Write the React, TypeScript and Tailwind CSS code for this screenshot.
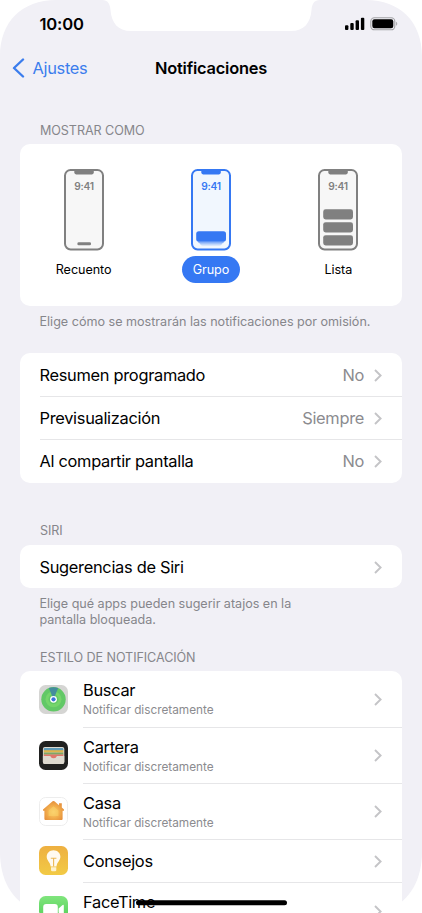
import type { ReactNode } from "react"

function Chevron() {
  return (
    <svg width="8" height="13" viewBox="0 0 8 13" fill="none" className="shrink-0">
      <path d="M1 1L6.6 6.5L1 12" stroke="#c4c4c7" strokeWidth="1.9" />
    </svg>
  )
}

function StatusIcons() {
  return (
    <svg width="54" height="14" viewBox="0 0 54 14">
      <rect x="0" y="8.3" width="3.4" height="4.7" rx="1" />
      <rect x="5.3" y="6" width="3.4" height="7" rx="1" />
      <rect x="10.6" y="3.3" width="3.4" height="9.7" rx="1" />
      <rect x="15.9" y="0.8" width="3.4" height="12.2" rx="1" />
      <rect x="25.8" y="0.8" width="24" height="12" rx="3.6" fill="none" stroke="#a3a3a6" strokeWidth="1.1" />
      <rect x="27.3" y="2.3" width="21" height="9" rx="2.2" />
      <path d="M51.2 4.8C52.6 5.3 52.6 8.3 51.2 8.8Z" fill="#a3a3a6" />
    </svg>
  )
}

type Mode = "count" | "stack" | "list"

function PhonePreview({ mode }: { mode: Mode }) {
  const active = mode === "stack"
  const color = active ? "#3578f3" : "#808080"
  return (
    <svg width="40" height="82" viewBox="0 0 40 82">
      <rect x="1" y="1" width="38" height="79.4" rx="5.6" fill={active ? "#f1f7fe" : "#f7f7f7"} stroke={color} strokeWidth="2" />
      <path d="M10.3 1H29.8V3.6Q29.8 5.4 28 5.4H12.1Q10.3 5.4 10.3 3.6Z" fill={color} />
      <text x="20" y="21.300" textAnchor="middle" fontSize="10.2" fontWeight="600" letterSpacing="-0.25" fill={color}>
        9:41
      </text>
      {mode === "count" && <rect x="13.4" y="73.3" width="13.6" height="3" rx="1.3" fill={color} />}
      {mode === "stack" && (
        <>
          <rect x="9" y="68" width="22" height="8.6" rx="2.5" fill="#c0d7fb" />
          <rect x="7" y="66" width="26" height="8.6" rx="2.5" fill="#85aff8" />
          <rect x="5.2" y="62.3" width="29.8" height="10.2" rx="2.6" fill={color} />
        </>
      )}
      {mode === "list" && (
        <>
          <rect x="5.2" y="40.3" width="29.8" height="10.2" rx="2.4" fill={color} />
          <rect x="5.2" y="53.2" width="29.8" height="10.2" rx="2.4" fill={color} />
          <rect x="5.2" y="66.2" width="29.8" height="10.2" rx="2.4" fill={color} />
        </>
      )}
    </svg>
  )
}

function BuscarIcon() {
  return (
    <svg width="29" height="29" viewBox="0 0 29 29">
      <rect width="29" height="29" rx="6.5" fill="#d5d5d3" />
      <circle cx="14.5" cy="14.3" r="12.2" fill="#62c866" />
      <circle cx="14.5" cy="14.3" r="8" fill="#75d56b" />
      <circle cx="14.5" cy="14.3" r="5" fill="#62c866" />
      <path d="M14.5 14.3L9.8 3.1Q14.5 1.2 19.2 3.1Z" fill="#448d9d" />
      <circle cx="14.5" cy="14.3" r="3.4" fill="#fff" />
      <circle cx="14.5" cy="14.3" r="2.1" fill="#3973dc" />
    </svg>
  )
}

function CarteraIcon() {
  return (
    <svg width="29" height="29" viewBox="0 0 29 29">
      <rect width="29" height="29" rx="6.5" fill="#202120" />
      <rect x="3.9" y="6" width="21.4" height="17" rx="2" fill="#dedad0" />
      <rect x="4.8" y="7" width="19.6" height="3" rx="1" fill="#5f9bb8" />
      <rect x="4.8" y="9.2" width="19.6" height="2.3" fill="#dfb54b" />
      <rect x="4.8" y="11.5" width="19.6" height="2.2" fill="#7fa765" />
      <rect x="4.8" y="13.5" width="19.6" height="4" fill="#e0776a" />
      <path d="M3.9 15H10.6C12 15 12 17.4 14.6 17.4C17.2 17.4 17.2 15 18.6 15H25.3V21Q25.3 23 23.3 23H5.9Q3.9 23 3.9 21Z" fill="#dedad0" />
    </svg>
  )
}

function CasaIcon() {
  return (
    <svg width="29" height="29" viewBox="0 0 29 29">
      <defs>
        <radialGradient id="casa" cx="14.5" cy="15" r="11" gradientUnits="userSpaceOnUse">
          <stop offset="0" stopColor="#fbd678" />
          <stop offset="0.5" stopColor="#f3b14e" />
          <stop offset="1" stopColor="#e6903c" />
        </radialGradient>
      </defs>
      <rect x="0.5" y="0.5" width="28" height="28" rx="6.2" fill="#fff" stroke="#ededed" />
      <path
        d="M13.6 4.3Q14.5 3.5 15.4 4.3L20 8.2V6.2H22.8V10.6L25 12.5V13.8H23.6V22Q23.6 23 22.6 23H6.4Q5.4 23 5.4 22V13.8H4V12.5Z"
        fill="url(#casa)"
      />
      <path d="M14.5 9.2L19.4 13.4V19H9.6V13.4Z" fill="#fad068" opacity="0.6" />
    </svg>
  )
}

function ConsejosIcon() {
  return (
    <svg width="29" height="29" viewBox="0 0 29 29">
      <defs>
        <linearGradient id="consejos" x1="0" y1="0" x2="0" y2="1">
          <stop offset="0" stopColor="#eeb041" />
          <stop offset="1" stopColor="#f2ca45" />
        </linearGradient>
      </defs>
      <rect width="29" height="29" rx="6.5" fill="url(#consejos)" />
      <path d="M14.5 4.2C10.6 4.2 7.7 7.1 7.7 10.7C7.7 14.5 11.2 16 11.7 20.4H17.5C18 16 21.4 14.5 21.4 10.7C21.4 7.1 18.4 4.2 14.5 4.2Z" fill="#fffaf0" />
      <path d="M11.8 12.3H17.4M14.6 12.3V20.4" stroke="#ecb855" strokeWidth="1.1" fill="none" />
      <path d="M12 21.3H17.3V24Q17.3 25.2 16.1 25.2H13.2Q12 25.2 12 24Z" fill="#fdf1cf" />
    </svg>
  )
}

function FaceTimeIcon() {
  return (
    <svg width="29" height="29" viewBox="0 0 29 29">
      <defs>
        <linearGradient id="facetime" x1="0" y1="0" x2="0" y2="1">
          <stop offset="0" stopColor="#80e57d" />
          <stop offset="1" stopColor="#48c94f" />
        </linearGradient>
      </defs>
      <rect width="29" height="29" rx="6.5" fill="url(#facetime)" />
      <rect x="4.2" y="8" width="14.6" height="13" rx="3" fill="#fff" />
      <path d="M19.6 12.4L23.6 9.1Q24.8 8.4 24.8 9.8V19.2Q24.8 20.6 23.6 19.9L19.6 16.6Z" fill="#fff" />
    </svg>
  )
}

const previews: { mode: Mode; label: string }[] = [
  { mode: "count", label: "Recuento" },
  { mode: "stack", label: "Grupo" },
  { mode: "list", label: "Lista" },
]

const options = [
  { label: "Resumen programado", value: "No" },
  { label: "Previsualización", value: "Siempre" },
  { label: "Al compartir pantalla", value: "No" },
]

const apps = [
  { name: "Buscar", detail: "Notificar discretamente", height: "h-14", icon: <BuscarIcon /> },
  { name: "Cartera", detail: "Notificar discretamente", height: "h-14", icon: <CarteraIcon /> },
  { name: "Casa", detail: "Notificar discretamente", height: "h-14", icon: <CasaIcon /> },
  { name: "Consejos", height: "h-[43px]", icon: <ConsejosIcon /> },
  { name: "FaceTime", height: "h-[57px]", nameClass: "pb-[18px]", icon: <FaceTimeIcon /> },
]

function SectionTitle({ children }: { children: ReactNode }) {
  return <h2 className="px-5 text-[12.6px] leading-4 tracking-[-0.08px] text-[#86868b]">{children}</h2>
}

export default function App() {
  return (
    <div className="relative h-[913px] w-[422px] overflow-hidden bg-[#f1f0f6] font-['Inter',sans-serif] text-black">
      {/* Status bar */}
      <div className="flex h-12 items-center justify-between pr-[23px] pl-[39.5px]">
        <span className="text-[16.6px] font-semibold tracking-[-0.2px]">10:00</span>
        <StatusIcons />
      </div>

      {/* Navigation bar */}
      <nav className="grid h-10 grid-cols-[1fr_auto_1fr] items-center">
        <a className="flex items-center gap-[7.5px] pl-3 text-[16.4px] tracking-[-0.3px] text-[#3b7ded]">
          <svg width="13" height="20" viewBox="0 0 13 20" fill="none">
            <path d="M11 1.5L2 10L11 18.5" stroke="#3b7ded" strokeWidth="2.4" strokeLinecap="round" strokeLinejoin="round" />
          </svg>
          Ajustes
        </a>
        <h1 className="text-[16.4px] font-semibold tracking-[-0.2px]">Notificaciones</h1>
        <span />
      </nav>

      <main className="px-5 pt-[35px]">
        <SectionTitle>MOSTRAR COMO</SectionTitle>
        <section className="mt-[5px] flex h-[162px] rounded-[10px] bg-white pt-[25px]">
          {previews.map(({ mode, label }) => (
            <div key={mode} className="flex flex-1 flex-col items-center gap-[5px]">
              <PhonePreview mode={mode} />
              <span
                className={`flex h-[27px] items-center rounded-full px-[11px] pt-px text-[12.6px] tracking-[-0.05px] ${
                  mode === "stack" ? "bg-[#3578f3] text-white" : ""
                }`}
              >
                {label}
              </span>
            </div>
          ))}
        </section>
        <p className="mt-2 pl-[19.5px] text-[12.6px] leading-4 tracking-[-0.01px] whitespace-nowrap text-[#86868b]">
          Elige cómo se mostrarán las notificaciones por omisión.
        </p>

        <section className="mt-[23px] overflow-hidden rounded-[10px] bg-white">
          {options.map(({ label, value }, i) => (
            <div key={label} className="pl-5">
              <div
                className={`flex items-center pr-5 text-[16.4px] tracking-[-0.3px] ${
                  i === 0 ? "h-[43px] pt-px" : i === 1 ? "h-[43px] border-t border-[#e6e6e8]" : "h-11 border-t border-[#e6e6e8]"
                }`}
              >
                <span className="-ml-[0.5px] flex-1">{label}</span>
                <span className="mr-[10px] text-[#8b8b8f]">{value}</span>
                <Chevron />
              </div>
            </div>
          ))}
        </section>

        <div className="mt-10">
          <SectionTitle>SIRI</SectionTitle>
        </div>
        <section className="mt-[6px] flex h-[43px] items-center justify-between rounded-[10px] bg-white pt-px pr-5 pl-[19.5px] text-[16.4px] tracking-[-0.3px]">
          Sugerencias de Siri
          <Chevron />
        </section>
        <p className="mt-2 px-[19.5px] text-[12.6px] leading-4 tracking-[-0.02px] text-[#86868b]">
          Elige qué apps pueden sugerir atajos en la
          <br />
          pantalla bloqueada.
        </p>

        <div className="mt-[21.5px]">
          <SectionTitle>ESTILO DE NOTIFICACIÓN</SectionTitle>
        </div>
        <section className="mt-[5.5px] rounded-t-[10px] bg-white pl-[19px]">
          {apps.map(({ name, detail, height, nameClass, icon }, i) => (
            <div key={name} className={`flex items-center gap-[15px] ${height}`}>
              {icon}
              <div className={`flex h-full flex-1 items-center justify-between pr-5 ${i > 0 ? "border-t border-[#e6e6e8]" : ""}`}>
                <div className={nameClass}>
                  <div className="text-[16.4px] leading-5 tracking-[-0.3px]">{name}</div>
                  {detail && <div className="mt-[2px] text-[11.8px] leading-4 text-[#8b8b8f]">{detail}</div>}
                </div>
                <Chevron />
              </div>
            </div>
          ))}
        </section>
      </main>

      {/* Screen corners, notch and home indicator */}
      <svg width="422" height="913" viewBox="0 0 422 913" className="pointer-events-none absolute inset-0">
        <path d="M0 0H56C22 0 0 22 0 56Z" fill="#fff" />
        <path d="M422 0H366C400 0 422 22 422 56Z" fill="#fff" />
        <path d="M0 913V852C0 880 12 899 30 908L40 913Z" fill="#fff" />
        <path d="M422 913V852C422 880 410 899 392 908L382 913Z" fill="#fff" />
        <path d="M102 0C108 0 110 4 110.5 10C111.5 23 118 31 131 31H291C304 31 310.5 23 311.5 10C312 4 314 0 320 0Z" fill="#fff" />
        <rect x="136" y="900.3" width="151" height="5" rx="2.5" fill="#000" />
      </svg>
    </div>
  )
}
